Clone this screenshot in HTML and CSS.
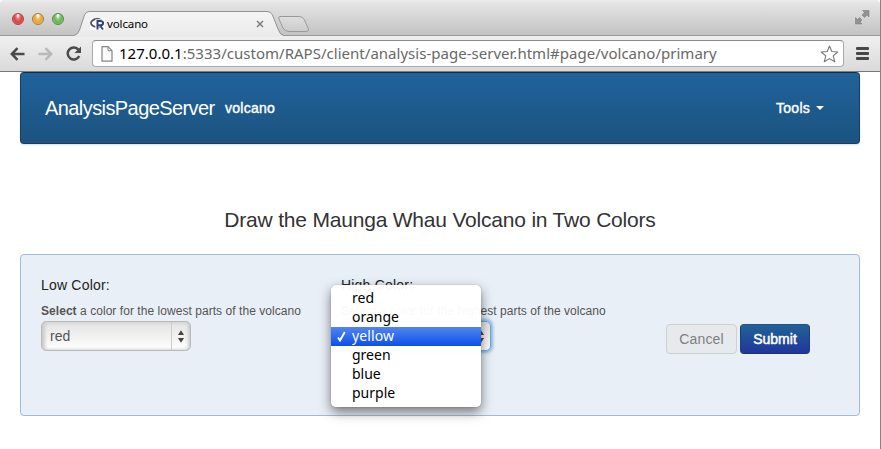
FILE: index.html
```html
<!DOCTYPE html>
<html lang="en">
<head>
<meta charset="utf-8">
<title>volcano</title>
<link rel="stylesheet" href="styles.css">
</head>
<body>
<div class="window">
  <header class="tabstrip">
    <div class="lights"><i class="light red"></i><i class="light amber"></i><i class="light green"></i></div>
    <div class="tab">
      <svg class="tab-shape" width="236" height="26" viewBox="0 0 236 26">
        <defs>
          <linearGradient id="tabfill" x1="0" y1="0" x2="0" y2="1"><stop offset="0" stop-color="#f5f5f5"/><stop offset="1" stop-color="#eaeaea"/></linearGradient>
          <linearGradient id="newfill" x1="0" y1="0" x2="0" y2="1"><stop offset="0" stop-color="#dedede"/><stop offset="1" stop-color="#cbcbcb"/></linearGradient>
        </defs>
        <path d="M206 5.500 H225 Q229 5.500 230.500 9 L234.500 18 Q235 20.500 232 20.500 H215 Q211 20.500 209 17 L205 8 Q204 5.500 206 5.500Z" fill="url(#newfill)" stroke="#9a9a9a"/>
        <path d="M0 24.500 Q4 23.500 5.500 19 L10.500 4 Q12 .500 15 .500 H193 Q197 .500 198.500 4 L204 18 Q206 24 210 24.500 V26 H0Z" fill="url(#tabfill)"/>
        <path d="M0 24.500 Q4 23.500 5.500 19 L10.500 4 Q12 .500 15 .500 H193 Q197 .500 198.500 4 L204 18 Q206 24 210 24.500" fill="none" stroke="#929292"/>
      </svg>
      <svg class="favicon" width="16" height="14" viewBox="0 0 16 14">
        <rect y="1" width="15" height="12" fill="#fff"/>
        <ellipse cx="7" cy="6" rx="6" ry="4" fill="none" stroke="#50535c" stroke-width="1.800"/>
        <path d="M7 12V4h3.200c4 0 3.600 4.300 0 4.300H7.500M10 8l3.500 4" fill="none" stroke="#fff" stroke-width="3.400"/>
        <path d="M7.500 12.500V4h2.800c4 0 3.600 4.300 0 4.300H7.500M10 8.500l3 4" fill="none" stroke="#32437d" stroke-width="2"/>
      </svg>
      <span class="tab-title">volcano</span>
      <svg class="tab-close" width="8" height="8" viewBox="0 0 8 8"><path d="M1 1l6 6M7 1L1 7" stroke="#7d7d7d" stroke-width="1.500"/></svg>
    </div>
    <svg class="fullscreen" width="15" height="15" viewBox="0 0 15 15"><path d="M7.500 .500h6.500v6.500l-2-2-2.500 2.500-2.500-2.500 2.500-2.500z M.500 7.500l2 2 2-2 2.500 2.500-2 2 2 2H.500z" fill="#929292" stroke="#747474" stroke-width=".5"/></svg>
  </header>

  <div class="toolbar">
    <svg class="nav" width="15" height="14" viewBox="0 0 15 14"><path d="M14.500 7H2M7.500 1.200L1.800 7l5.700 5.800" fill="none" stroke="#4b4b4b" stroke-width="2.500"/></svg>
    <svg class="nav forward" width="15" height="14" viewBox="0 0 15 14"><path d="M.500 7H13M7.500 1.200L13.200 7l-5.700 5.800" fill="none" stroke="#b9b9b9" stroke-width="2.500"/></svg>
    <svg class="nav reload" width="16" height="15" viewBox="0 0 16 15"><path d="M12.500 3.800A6 6 0 1 0 13.200 10" fill="none" stroke="#4b4b4b" stroke-width="2.500"/><path d="M15 .500v6.500H8.500z" fill="#4b4b4b"/></svg>
    <div class="omnibox">
      <svg width="12" height="16" viewBox="0 0 12 16"><path d="M1 .700h6l4 4v10.500H1z" fill="#fafafa" stroke="#858585" stroke-width="1.200"/><path d="M7 .700v4h4" fill="none" stroke="#858585"/></svg>
      <span class="url"><b>127.0.0.1</b>:5333/custom/RAPS/client/analysis-page-server.html#page/volcano/primary</span>
      <svg class="star" width="19" height="18" viewBox="0 0 19 18"><path d="M9.500 1l2.300 5.500 6 .500-4.600 3.900 1.500 5.800-5.200-3.100-5.200 3.100 1.500-5.800L1.200 7l6-.500z" fill="#fff" stroke="#777" stroke-width="1.100" stroke-linejoin="round"/></svg>
    </div>
    <div class="menu-icon"><i></i><i></i><i></i></div>
  </div>

  <main class="page">
    <nav class="navbar">
      <span class="brand">AnalysisPageServer</span>
      <span class="crumb">volcano</span>
      <span class="tools">Tools</span><i class="caret"></i>
    </nav>
    <h1><span>Draw the Maunga Whau Volcano in Two Colors</span></h1>
    <form class="well">
      <section class="field">
        <label>Low Color:</label>
        <p><strong>Select</strong> a color for the lowest parts of the volcano</p>
        <div class="select"><span>red</span><svg width="19" height="28" viewBox="0 0 19 28"><path d="M9.500 8l3.200 5h-6.400zM9.500 21l3.200-5h-6.400z" fill="#444"/></svg></div>
      </section>
      <section class="field high">
        <label>High Color:</label>
        <p><strong>Select</strong> a color for the highest parts of the volcano</p>
        <div class="select focus"><svg width="19" height="28" viewBox="0 0 19 28"><path d="M9.500 8l3.200 5h-6.400zM9.500 21l3.200-5h-6.400z" fill="#444"/></svg></div>
        <ul class="popup">
          <li>red</li><li>orange</li>
          <li class="chosen"><svg width="9" height="11" viewBox="0 0 9 11"><path d="M1 6.500L3 9.500 7.800 1" fill="none" stroke="#fff" stroke-width="1.900"/></svg>yellow</li>
          <li>green</li><li>blue</li><li>purple</li>
        </ul>
      </section>
      <div class="actions">
        <button type="button" class="cancel">Cancel</button>
        <button type="button" class="submit">Submit</button>
      </div>
    </form>
  </main>
</div>
</body>
</html>
```

FILE: styles.css
```css
* { box-sizing: border-box; }
body { margin: 0; overflow: hidden; background: #fff; font-family: "Liberation Sans", Arial, sans-serif; }
.window { width: 881px; height: 449px; border-right: 1px solid #858585; background: #fff; }

.tabstrip { position: relative; display: flex; height: 36px; background: linear-gradient(#ececec, #e4e4e4 10%, #c5c5c5 94%); border-bottom: 1px solid #999; border-radius: 4px 4px 0 0; }
.lights { display: flex; gap: 8px; padding: 13px 0 0 12px; width: 74px; }
.light { width: 12px; height: 12px; border-radius: 50%; border: 1px solid; }
.red { background: radial-gradient(ellipse at 50% 15%, #fff 0 5%, #ee6868 30%, #dc4045 60%, #ff9490); border-color: #a44347; }
.amber { background: radial-gradient(ellipse at 50% 15%, #fff 0 5%, #f1be63 30%, #e5a33c 60%, #ffe792); border-color: #a67a3b; }
.green { background: radial-gradient(ellipse at 50% 15%, #fff 0 5%, #91cb7c 30%, #66b451 60%, #c6f2a0); border-color: #55894c; }
.tab { position: relative; display: flex; width: 236px; height: 26px; margin-top: 11px; padding-left: 16px; z-index: 1; }
.tab-shape { position: absolute; left: 0; top: 0; }
.favicon, .tab-title, .tab-close { position: relative; }
.favicon { margin-top: 6px; }
.tab-title { width: 42px; margin-left: 1px; margin-top: 4px; font: 11.5px/17px "Noto Sans", sans-serif; letter-spacing: -.12px; color: #000; white-space: nowrap; }
.tab-close { margin: 9px 0 0 107px; }
.fullscreen { margin: 10px 10px 0 auto; }

.toolbar { display: flex; align-items: center; height: 36px; padding: 0 11px 0 10px; background: linear-gradient(#f0f0f0, #dadada); border-bottom: 1px solid #777; }
.nav { flex: none; }
.forward { margin-left: 13px; }
.reload { margin-left: 13px; }
.omnibox { display: flex; align-items: center; width: 752px; height: 27px; margin-left: 10px; padding: 0 4px 0 8px; background: #fff; border: 1px solid #aaa; border-top-color: #8d8d8d; border-radius: 4px; }
.url { margin: -2px 0 0 6px; font: 15px/24px "Noto Sans", sans-serif; letter-spacing: .02px; color: #686868; white-space: nowrap; }
.url b { color: #000; font-weight: 400; }
.star { margin-left: auto; }
.menu-icon { display: grid; gap: 2px; width: 13px; margin-left: 12px; }
.menu-icon i { height: 3px; border-radius: 1px; background: #484848; }

.page { padding: 0 20px; }
.navbar { display: flex; align-items: center; height: 72px; padding: 0 35px 0 24px; border: 1px solid #173f61; border-top-color: #132d43; border-radius: 4px; background: linear-gradient(#20639a, #1b5380); color: #fff; font-size: 14px; box-shadow: 0 1px 2px #ddd; }
.brand { width: 171px; font-size: 20px; letter-spacing: -.58px; white-space: nowrap; }
.crumb { margin-left: 9px; letter-spacing: .25px; -webkit-text-stroke: .4px #fff; }
.tools { margin-left: auto; letter-spacing: .25px; -webkit-text-stroke: .4px #fff; }
.caret { margin-left: 6px; border: 4px solid transparent; border-top-color: #fff; border-bottom: 0; }
h1 { margin: 0; height: 110px; padding-top: 63px; text-align: center; color: #333; font: 21px/26px "Liberation Sans", sans-serif; letter-spacing: -.2px; white-space: nowrap; }

.well { display: flex; height: 162px; padding: 0 20px; border: 1px solid #a3bbd2; border-radius: 4px; background: #e8eff6; }
.field { position: relative; width: 300px; padding-top: 20px; }
label { display: block; height: 20px; font-size: 14px; line-height: 20px; letter-spacing: .2px; color: #222; }
.field p { margin: 6px 0 0; height: 20px; font-size: 12px; line-height: 20px; letter-spacing: .05px; color: #555; white-space: nowrap; }
.select { display: flex; width: 150px; height: 30px; border: 1px solid #bbb; border-radius: 5px; background: linear-gradient(#e3e3e3, #fff); box-shadow: inset 3px 0 3px #ccc, inset -2px 0 3px #ccc; color: #555; font-size: 14px; line-height: 28px; padding-left: 8px; }
.select svg { margin-left: auto; border-left: 1px solid #ccc; }
.focus { border-color: #6daadb; box-shadow: 0 0 3px 2px #8fbae3; }
.popup { position: absolute; left: -10px; top: 30px; width: 150px; height: 122px; margin: 0; padding: 4px 0; list-style: none; border-radius: 5px; background: rgba(255,255,255,.97); box-shadow: 0 5px 12px rgba(0,0,0,.5), 0 0 1px #777; font: 14px/17px "Noto Sans", sans-serif; color: #000; }
.popup li { position: relative; height: 19px; padding-left: 21px; }
.popup .chosen { color: #fff; background: linear-gradient(#5385ed, #0a50eb); letter-spacing: .1px; }
.popup svg { position: absolute; left: 6px; top: 4px; }
.actions { display: flex; gap: 3px; margin: 69px 0 0 25px; }
button { height: 30px; padding: 0; border: 1px solid #cbd0d3; border-radius: 4px; font: 14px "Liberation Sans", sans-serif; }
.cancel { width: 71px; background: #e6eaed; color: #7e7e7e; letter-spacing: .15px; }
.submit { width: 70px; border-color: #205487 #203b83 #193378; background: linear-gradient(#216298, #20369a); color: #fff; -webkit-text-stroke: .5px #fff; }
```
